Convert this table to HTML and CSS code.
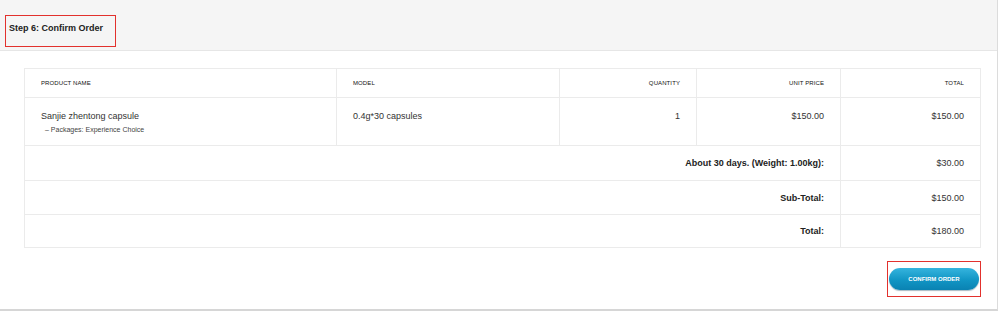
FILE: index.html
```html
<!DOCTYPE html>
<html lang="en">
<head>
<meta charset="utf-8">
<title>Checkout – Confirm Order</title>
<link rel="stylesheet" href="styles.css">
</head>
<body>
<div class="panel">
  <div class="panel-heading">
    <h4 class="panel-title">Step 6: Confirm Order</h4>
  </div>
  <div class="panel-body">
    <table class="order-table">
      <colgroup>
        <col class="c-name">
        <col class="c-model">
        <col class="c-qty">
        <col class="c-price">
        <col class="c-total">
      </colgroup>
      <thead>
        <tr>
          <th class="left">Product Name</th>
          <th class="left">Model</th>
          <th class="right">Quantity</th>
          <th class="right">Unit Price</th>
          <th class="right">Total</th>
        </tr>
      </thead>
      <tbody>
        <tr class="product-row">
          <td class="left">
            <div class="prod-name">Sanjie zhentong capsule</div>
            <div class="prod-option">&ndash; Packages: Experience Choice</div>
          </td>
          <td class="left">0.4g*30 capsules</td>
          <td class="right">1</td>
          <td class="right">$150.00</td>
          <td class="right">$150.00</td>
        </tr>
      </tbody>
      <tfoot>
        <tr class="sum-row sum-first">
          <td colspan="4" class="right sum-label">About 30 days. (Weight: 1.00kg):</td>
          <td class="right">$30.00</td>
        </tr>
        <tr class="sum-row">
          <td colspan="4" class="right sum-label">Sub-Total:</td>
          <td class="right">$150.00</td>
        </tr>
        <tr class="sum-row sum-last">
          <td colspan="4" class="right sum-label">Total:</td>
          <td class="right">$180.00</td>
        </tr>
      </tfoot>
    </table>
    <div class="buttons">
      <div class="btn-frame">
        <button type="button" class="btn-confirm">Confirm Order</button>
      </div>
    </div>
  </div>
</div>
</body>
</html>
```

FILE: styles.css
```css
html, body {
  margin: 0;
  padding: 0;
  background: #ffffff;
}

body {
  font-family: "Liberation Sans", Arial, sans-serif;
  color: #333333;
}

.panel {
  width: 998px;
  height: 311px;
  box-sizing: border-box;
  border-right: 1px solid #dcdcdc;
  border-bottom: 2px solid #d6d6d6;
  background: #ffffff;
}

.panel-heading {
  height: 51px;
  box-sizing: border-box;
  padding: 15px 0 0 5px;
  background: #f5f5f5;
  border-bottom: 1px solid #e6e6e6;
}

.panel-title {
  margin: 0;
  width: 111px;
  height: 32px;
  box-sizing: border-box;
  padding: 7px 0 0 3px;
  border: 1px solid #e2312d;
  font-size: 9px;
  line-height: 11px;
  font-weight: bold;
  color: #222222;
}

.panel-body {
  padding: 17px 17px 0 24px;
}

.order-table {
  width: 956px;
  border-collapse: collapse;
  table-layout: fixed;
  border: 1px solid #ebebeb;
  font-size: 9px;
}

.c-name { width: 312px; }
.c-model { width: 223px; }
.c-qty { width: 137px; }
.c-price { width: 144px; }
.c-total { width: 140px; }

.order-table th,
.order-table td {
  border: 1px solid #ebebeb;
  padding: 0 16px;
}

.order-table th {
  height: 28px;
  font-size: 6px;
  font-weight: normal;
  text-transform: uppercase;
  color: #111111;
  letter-spacing: 0.1px;
}

.left { text-align: left; }
.right { text-align: right; }

.product-row td {
  height: 48px;
  vertical-align: top;
  padding-top: 13px;
  box-sizing: border-box;
  line-height: 11px;
  color: #333333;
}

.prod-name {
  font-size: 9px;
}

.prod-option {
  margin-top: 3px;
  padding-left: 4px;
  font-size: 7px;
  line-height: 10px;
  color: #444444;
}

.sum-row td {
  height: 33px;
  color: #333333;
}

.sum-first td {
  height: 34px;
}

.sum-last td {
  height: 32px;
}

.sum-row .sum-label {
  font-weight: bold;
  color: #222222;
}

.buttons {
  display: flex;
  justify-content: flex-end;
  margin-top: 13px;
  margin-right: -1px;
}

.btn-frame {
  width: 94px;
  height: 36px;
  box-sizing: border-box;
  border: 1px solid #e2312d;
  display: flex;
  align-items: center;
  justify-content: center;
}

.btn-confirm {
  width: 90px;
  height: 22px;
  border: none;
  border-radius: 11px;
  background: linear-gradient(#35b4de, #1195c4 55%, #0a82b2);
  box-shadow: 0 1px 1px rgba(0, 60, 90, 0.35);
  color: #ffffff;
  font-family: "Liberation Sans", Arial, sans-serif;
  font-size: 6px;
  font-weight: bold;
  text-transform: uppercase;
  padding: 0;
  cursor: pointer;
}
```
